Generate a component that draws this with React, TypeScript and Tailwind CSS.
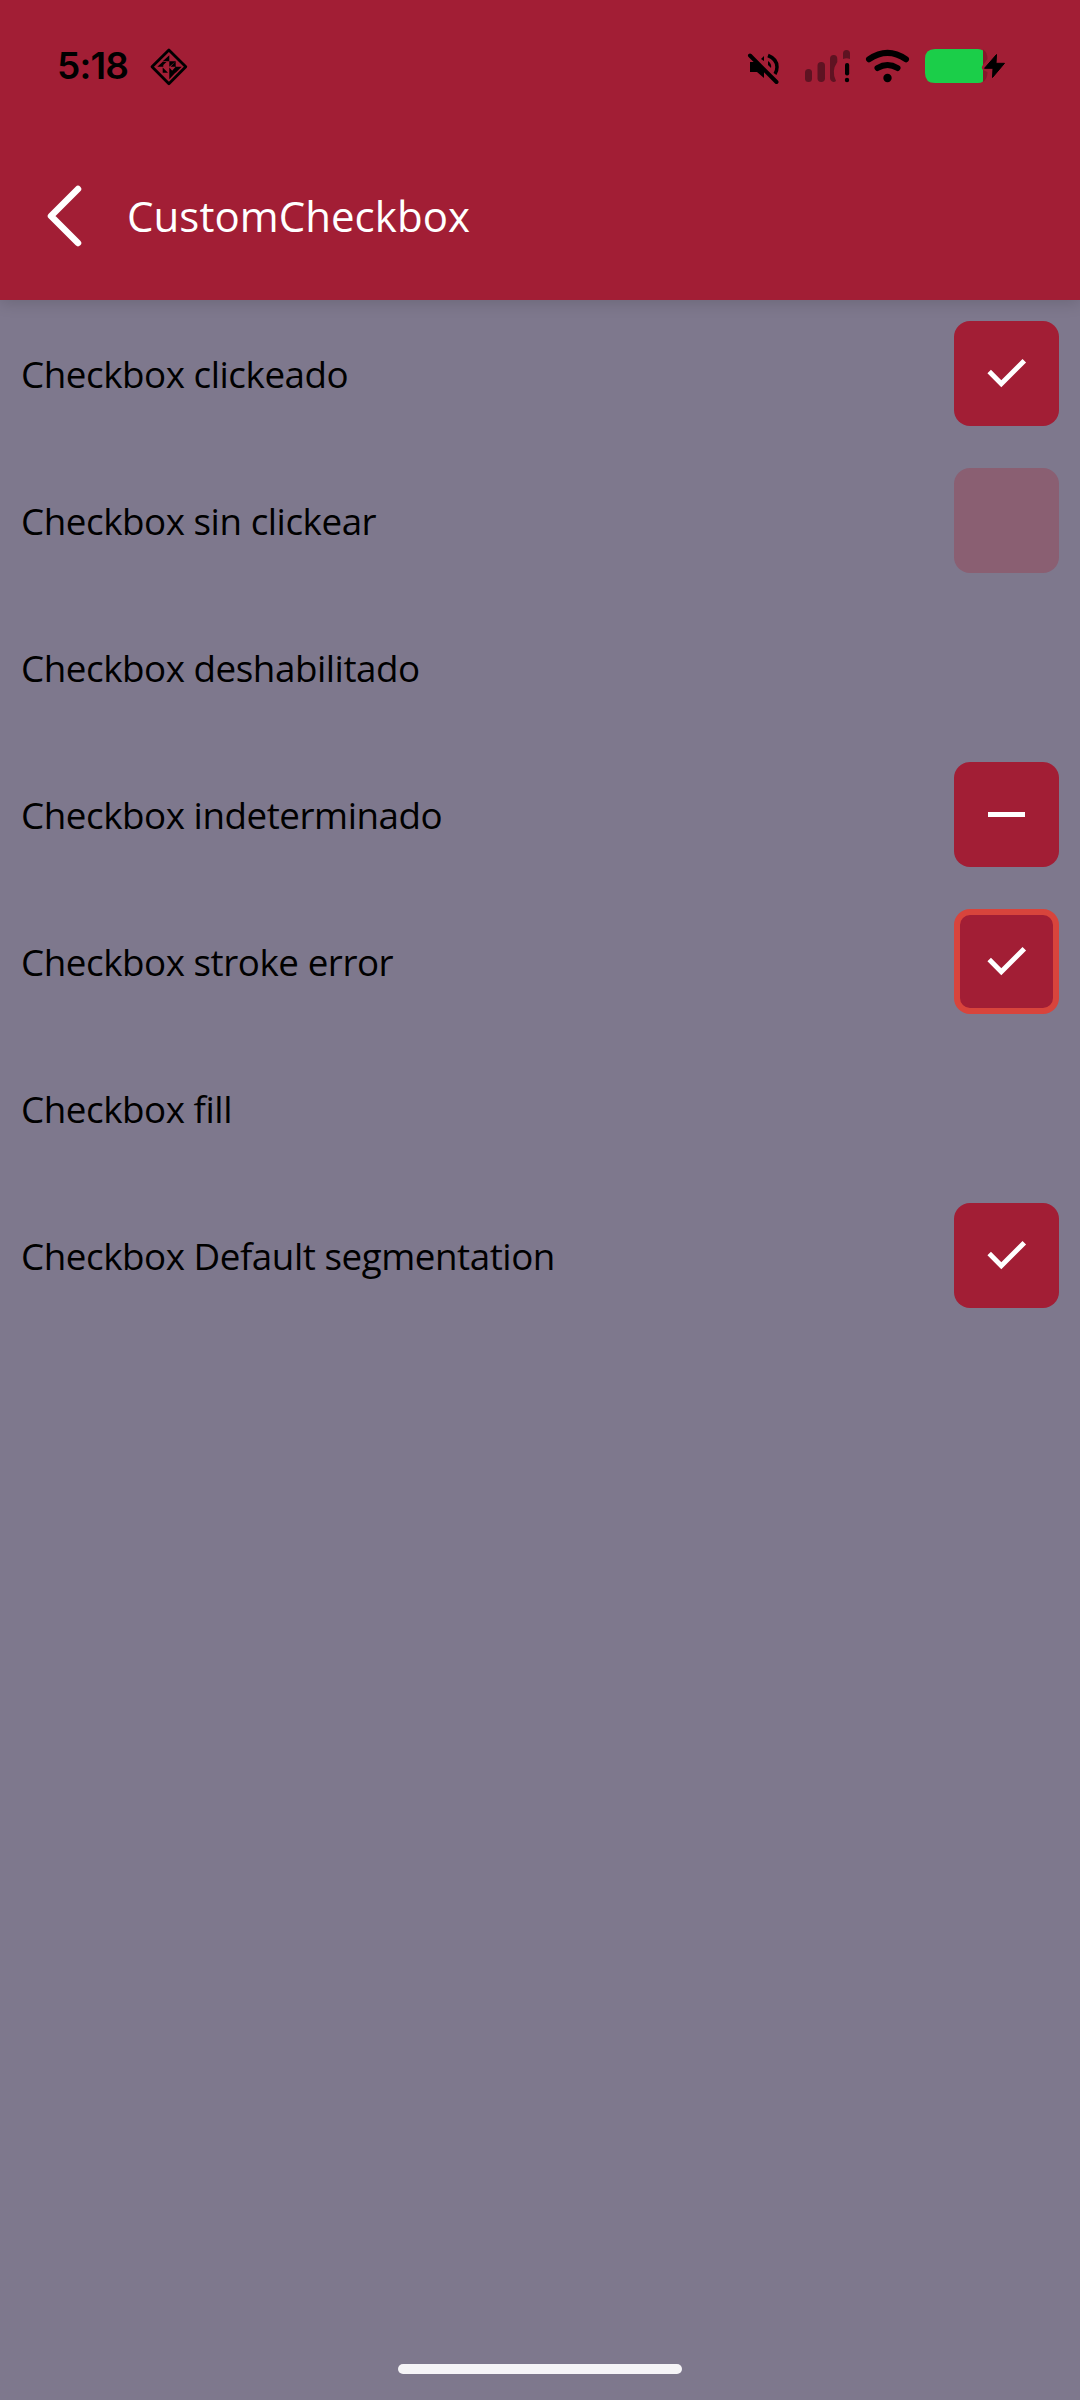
const rows: { label: string; kind: 'checked' | 'unchecked' | 'hidden' | 'indeterminate' | 'error' }[] = [
  { label: 'Checkbox clickeado', kind: 'checked' },
  { label: 'Checkbox sin clickear', kind: 'unchecked' },
  { label: 'Checkbox deshabilitado', kind: 'hidden' },
  { label: 'Checkbox indeterminado', kind: 'indeterminate' },
  { label: 'Checkbox stroke error', kind: 'error' },
  { label: 'Checkbox fill', kind: 'hidden' },
  { label: 'Checkbox Default segmentation', kind: 'checked' },
];

const boxStyles = {
  checked: 'bg-[#a21e35]',
  unchecked: 'bg-[#8a5f72]',
  hidden: 'invisible',
  indeterminate: 'bg-[#a21e35]',
  error: 'bg-[#a21e35] border-6 border-[#d8443c]',
};

function Box({ kind }: { kind: keyof typeof boxStyles }) {
  return (
    <div className={`flex size-[105px] shrink-0 items-center justify-center rounded-[16px] ${boxStyles[kind]}`}>
      {(kind === 'checked' || kind === 'error') && (
        <svg className="size-[63px] shrink-0" viewBox="0 0 63 63" fill="none" stroke="#fff" strokeWidth="5">
          <path d="M14.2 29.6 L26.3 41.7 L49.3 18.7" />
        </svg>
      )}
      {kind === 'indeterminate' && <div className="h-[5px] w-[37px] bg-white" />}
    </div>
  );
}

function StatusBar() {
  return (
    <div className="flex h-[132px] items-start justify-between pl-[57px] pr-[72px] pt-[44px]">
      <div className="flex items-center">
        <span className="-mt-[3px] w-[89px] font-['Inter'] text-[37px] font-semibold leading-[46px] tracking-[-0.8px] text-black">5:18</span>
        <svg className="size-[46px]" viewBox="146 44 46 46">
          <path d="M168.900 49.900L185.800 66.800L168.900 83.700L152 66.800Z" fill="none" stroke="#000" strokeWidth="2.800" strokeLinejoin="round" />
          <path d="M169.300 55.300V61.200H162.700ZM169.300 61.200H175.700L169.300 66.800ZM175.700 61.200V66.800L170.500 66.800ZM157.300 66.800L163.300 61.200V66.800ZM175.200 66.800H181.700L175.700 72.700ZM175.700 66.800V72.700L170.300 72.700ZM162.700 67.500L168 72.700H162.700ZM169.300 67.500L174 72.700H169.300ZM169.300 72.700H175.300L169.300 79.300ZM163.300 62H166.500L163.300 65Z" />
        </svg>
      </div>
      <div className="flex items-center">
        <svg className="h-[46px] w-[266px]" viewBox="742 44 266 46">
          <path d="M750 62h6l8 8v8l-7-6h-7z" />
          <path d="M761 59l3-3v5z" />
          <path d="M768 55.500Q777 59 777 67Q777 71 775 74" fill="none" stroke="#000" strokeWidth="3.500" />
          <path d="M768 61q4 3 3 7l-3-3z" />
          <path d="M750 55.500L776.500 82" stroke="#000" strokeWidth="4" strokeLinecap="round" />
          <g fill="#5e1322">
            <rect x="805" y="69" width="7" height="13" rx="3.500" />
            <rect x="817.500" y="62" width="7.500" height="20" rx="3.700" />
            <path d="M830 59Q830 55 833.700 55Q837.300 55 837.300 59V62Q831 71 836 81Q834 82.500 832 81.500Q830 80.500 830 78Z" />
            <path d="M843 59V53.500Q843 50 846.500 50Q850 50 850 53.500V59Q846.500 57.500 843 59Z" />
          </g>
          <rect x="845" y="63" width="4.200" height="12.500" rx="2" />
          <circle cx="847" cy="80" r="2.200" />
          <g fill="none" stroke="#000" strokeWidth="6" strokeLinecap="round">
            <path d="M869 59.300Q887.500 46.500 906 59.300" />
            <path d="M877.500 68Q887.500 62 897.500 68" />
          </g>
          <circle cx="887.500" cy="78" r="4.200" />
          <path d="M983 49.500Q987.500 52 987.500 59L983 65V70L987.500 72Q987.500 79 983 82Z" fill="#86172b" />
          <path d="M935 49H978Q981 49 983 50.500V65Q980.500 67.500 983 70V81.500Q981 83 978 83H935Q925 83 925 73V59Q925 49 935 49Z" fill="#1bce49" />
          <path d="M996.500 54.500L984.500 68.300H993L992.500 77.500L1004.500 63.300H996Z" stroke="#000" strokeLinejoin="round" />
        </svg>
      </div>
    </div>
  );
}

export default function App() {
  return (
    <div className="flex h-[2400px] w-[1080px] flex-col bg-[#7e788d] font-['Open_Sans',sans-serif]">
      <header className="h-[300px] shrink-0 bg-[#a21e35] shadow-[0_4px_14px_rgba(0,0,0,0.13)]">
        <StatusBar />
        <div className="flex h-[168px] items-start pl-[42px]">
          <svg className="h-[168px] w-[85px]" viewBox="42 132 85 168" fill="none" stroke="#fff" strokeWidth="6.500" strokeLinecap="round" strokeLinejoin="round">
            <path d="M78 189L51 216L78 243" />
          </svg>
          <h1 className="pt-[55px] text-[42px] leading-[57px] tracking-[0.05px] text-white">CustomCheckbox</h1>
        </div>
      </header>
      <main className="flex flex-1 flex-col">
        {rows.map((row) => (
          <div key={row.label} className="flex h-[147px] items-center justify-between px-[21px]">
            <span className="text-[36.750px] leading-[50px] tracking-[-0.450px] text-black">{row.label}</span>
            <Box kind={row.kind} />
          </div>
        ))}
      </main>
      <div className="mb-[26px] h-[10px] w-[284px] self-center rounded-full bg-[#f5f4f7]" />
    </div>
  );
}
